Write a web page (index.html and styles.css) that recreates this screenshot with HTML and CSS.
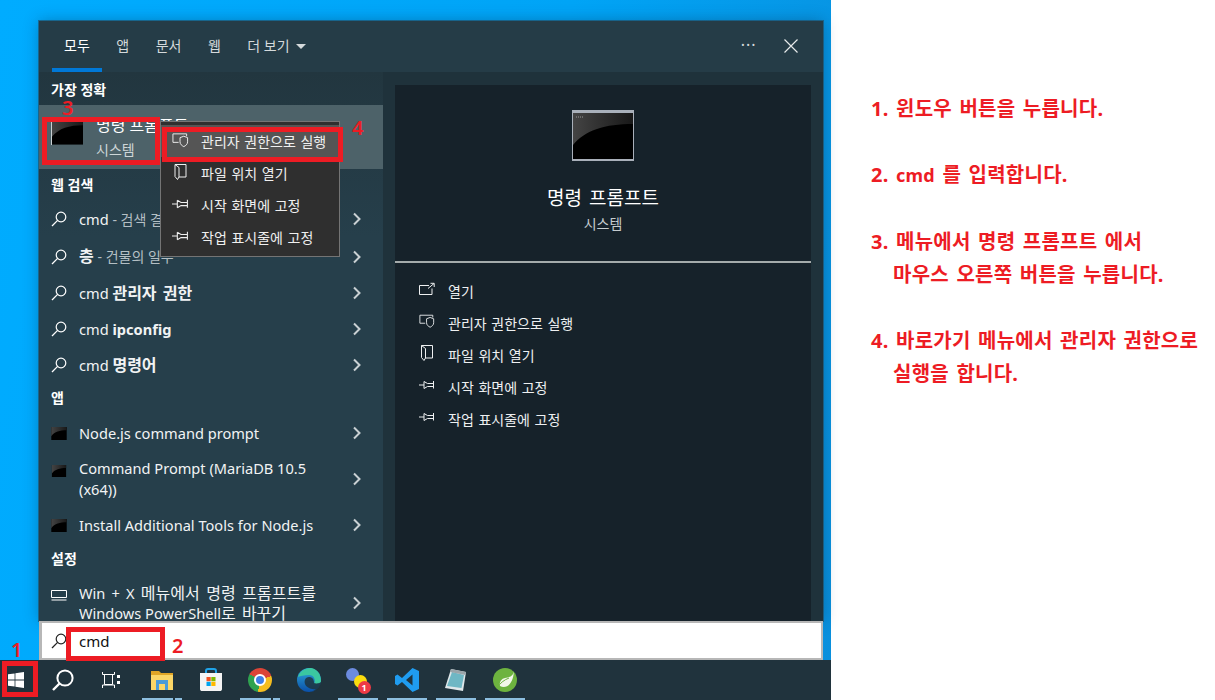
FILE: index.html
```html
<!DOCTYPE html>
<html lang="ko">
<head>
    <meta charset="UTF-8">
    <meta name="viewport" content="width=device-width, initial-scale=1.0">
    <title>명령 프롬프트 관리자 권한으로 실행</title>
    <link rel="stylesheet" href="styles.css">
</head>
<body>
    <svg class="defs" width="0" height="0">
        <defs>
            <linearGradient id="cmdGlow" x1="0" y1="0" x2="1" y2="0">
                <stop offset="0" stop-color="#444"/>
                <stop offset="1" stop-color="#181818"/>
            </linearGradient>
            <linearGradient id="edgeBlue" x1="0" y1="0" x2="0" y2="1">
                <stop offset="0" stop-color="#2fa8d8"/>
                <stop offset="1" stop-color="#0a4fa8"/>
            </linearGradient>
            <symbol id="i-search" viewBox="0 0 16 16">
                <circle cx="10" cy="6" r="4.8" fill="none" stroke="currentColor" stroke-width="1.2"/>
                <path d="M6.6 9.4 1 15" fill="none" stroke="currentColor" stroke-width="1.3"/>
            </symbol>
            <symbol id="i-chevron" viewBox="0 0 10 14">
                <path d="M2 1.5 7.5 7 2 12.5" fill="none" stroke="currentColor" stroke-width="2"/>
            </symbol>
            <symbol id="i-cmd" viewBox="0 0 32 27">
                <rect width="32" height="27" fill="#000"/>
                <path d="M0 0H32V7C18 7 7 10 0 19Z" fill="url(#cmdGlow)"/>
            </symbol>
            <symbol id="i-admin" viewBox="0 0 18 16">
                <path d="M7 10.5H1V1.5H15.5V4" fill="none" stroke="currentColor"/>
                <path d="M8.5 5.5 12.5 4 16.5 5.5V10C16.5 12.5 14.5 14 12.5 15 10.5 14 8.5 12.5 8.5 10Z" fill="none" stroke="currentColor"/>
            </symbol>
            <symbol id="i-file" viewBox="0 0 16 16">
                <path d="M2.5 .5H13.5V13H6.5M2.5 .5V12.5L5 15.5 6.5 13V3.5L2.5 .5" fill="none" stroke="currentColor"/>
            </symbol>
            <symbol id="i-pin" viewBox="0 0 16 10">
                <path d="M0 5H5M5 1.5 8.5 3.5H14.5M14.5 1V8.5M5 8.5 8.5 6.5H14.5M5 1.5V8.5" fill="none" stroke="currentColor"/>
            </symbol>
            <symbol id="i-open" viewBox="0 0 16 13">
                <path d="M10 3H.5V12H13V6M9 6 15 1M11.5 .8H15.2V4.5" fill="none" stroke="currentColor"/>
            </symbol>
        </defs>
    </svg>

    <div class="page">
        <div class="desktop">
            <div class="start-wrap">
                <div class="panel">
                    <div class="tabs">
                        <div class="tab active">모두</div>
                        <div class="tab">앱</div>
                        <div class="tab">문서</div>
                        <div class="tab">웹</div>
                        <div class="tab">더 보기 <span class="caret"></span></div>
                        <div class="tab-dots">···</div>
                        <svg class="tab-close" viewBox="0 0 14 14"><path d="M.5 .5 13.5 13.5M13.5 .5 .5 13.5" stroke="currentColor" stroke-width="1.2"/></svg>
                    </div>
                    <div class="panel-body">
                        <div class="results">
                            <div class="heading first">가장 정확</div>
                            <div class="best">
                                <svg class="best-icon"><use href="#i-cmd"/></svg>
                                <div>
                                    <div class="best-name">명령 프롬프트</div>
                                    <div class="best-sub">시스템</div>
                                </div>
                            </div>

                            <div class="heading">웹 검색</div>
                            <div class="row">
                                <svg class="row-icon"><use href="#i-search"/></svg>
                                <span class="row-text">cmd <span class="dim">- 검색 결과 보기</span></span>
                                <svg class="chevron"><use href="#i-chevron"/></svg>
                            </div>
                            <div class="row second">
                                <svg class="row-icon"><use href="#i-search"/></svg>
                                <span class="row-text"><b class="ko">층</b> <span class="dim">- 건물의 일부</span></span>
                                <svg class="chevron"><use href="#i-chevron"/></svg>
                            </div>
                            <div class="row">
                                <svg class="row-icon"><use href="#i-search"/></svg>
                                <span class="row-text">cmd <b class="ko">관리자 권한</b></span>
                                <svg class="chevron"><use href="#i-chevron"/></svg>
                            </div>
                            <div class="row">
                                <svg class="row-icon"><use href="#i-search"/></svg>
                                <span class="row-text">cmd <b>ipconfig</b></span>
                                <svg class="chevron"><use href="#i-chevron"/></svg>
                            </div>
                            <div class="row">
                                <svg class="row-icon"><use href="#i-search"/></svg>
                                <span class="row-text">cmd <b class="ko">명령어</b></span>
                                <svg class="chevron"><use href="#i-chevron"/></svg>
                            </div>

                            <div class="heading apps">앱</div>
                            <div class="row">
                                <svg class="row-icon app"><use href="#i-cmd"/></svg>
                                <span class="row-text">Node.js command prompt</span>
                                <svg class="chevron"><use href="#i-chevron"/></svg>
                            </div>
                            <div class="row tall">
                                <svg class="row-icon app top"><use href="#i-cmd"/></svg>
                                <span class="row-text">Command Prompt (MariaDB 10.5<br>(x64))</span>
                                <svg class="chevron"><use href="#i-chevron"/></svg>
                            </div>
                            <div class="row">
                                <svg class="row-icon app"><use href="#i-cmd"/></svg>
                                <span class="row-text">Install Additional Tools for Node.js</span>
                                <svg class="chevron"><use href="#i-chevron"/></svg>
                            </div>

                            <div class="heading">설정</div>
                            <div class="row tall settings">
                                <svg class="row-icon top" viewBox="0 0 16 12"><path d="M.5 1.5H15.5V8.5H.5ZM.5 11H15.5" fill="none" stroke="currentColor"/></svg>
                                <span class="row-text"><span class="spaced">Win + X <span class="ko">메뉴에서 명령 프롬프트를</span></span><br>Windows PowerShell<span class="ko">로 바꾸기</span></span>
                                <svg class="chevron"><use href="#i-chevron"/></svg>
                            </div>
                        </div>

                        <div class="preview">
                            <div class="preview-head">
                                <div class="preview-icon">
                                    <svg viewBox="0 0 60 46"><rect width="60" height="46" fill="#000"/><path d="M0 0H60V11C32 11 12 17 0 32Z" fill="url(#cmdGlow)"/><path d="M3 4H10" stroke="#999" stroke-dasharray="1 1"/></svg>
                                </div>
                                <div class="preview-name">명령 프롬프트</div>
                                <div class="preview-sub">시스템</div>
                            </div>
                            <div class="actions">
                                <div class="action"><svg class="action-icon"><use href="#i-open"/></svg>열기</div>
                                <div class="action"><svg class="action-icon"><use href="#i-admin"/></svg>관리자 권한으로 실행</div>
                                <div class="action"><svg class="action-icon"><use href="#i-file"/></svg>파일 위치 열기</div>
                                <div class="action"><svg class="action-icon"><use href="#i-pin"/></svg>시작 화면에 고정</div>
                                <div class="action"><svg class="action-icon"><use href="#i-pin"/></svg>작업 표시줄에 고정</div>
                            </div>
                        </div>
                    </div>
                </div>
            </div>

            <div class="searchbox">
                <svg class="search-icon"><use href="#i-search"/></svg>
                <span>cmd</span>
            </div>

            <div class="taskbar">
                <div class="task start">
                    <svg viewBox="0 0 16 16" width="16" height="16"><path d="M0 2.3 6.6 1.4V7.5H0ZM7.4 1.3 16 0V7.5H7.4ZM0 8.4H6.6V14.6L0 13.7ZM7.4 8.4H16V16L7.4 14.8Z" fill="#fff"/></svg>
                </div>
                <div class="task wide">
                    <svg viewBox="0 0 24 24" width="24" height="24"><circle cx="14" cy="10" r="7.6" fill="none" stroke="#fff" stroke-width="2"/><path d="M8.5 15.5 2 22" stroke="#fff" stroke-width="2.4"/></svg>
                </div>
                <div class="task wide view">
                    <svg viewBox="0 0 18 16" width="18" height="16"><path d="M.5 0V2.5H12.5V0M2.5 3V12.5H10.5V3M.5 16V13H12.5V16" fill="none" stroke="#fff"/><rect x="15" y="3" width="3" height="3" fill="#fff"/><rect x="15" y="9" width="3" height="3" fill="#fff"/></svg>
                </div>
                <div class="task app-task running split">
                    <svg viewBox="0 0 24 24" width="24" height="24">
                        <path d="M1 3H9L11 5H23V8H1Z" fill="#e0a526"/>
                        <path d="M1 7H23V22H1Z" fill="#fbd667"/>
                        <path d="M6 12H18V22H15V16H9V22H6Z" fill="#4a9bd9"/>
                    </svg>
                </div>
                <div class="task app-task">
                    <svg viewBox="0 0 24 24" width="24" height="24">
                        <path d="M7 6V3C7 1.5 8 1 9 1H15C16 1 17 1.5 17 3V6" fill="none" stroke="#1fa3e8" stroke-width="2"/>
                        <path d="M1 5H23V21C23 22.5 22 23 21 23H3C2 23 1 22.5 1 21Z" fill="#f4f4f4"/>
                        <rect x="7.5" y="9" width="4.2" height="4.2" fill="#f25022"/>
                        <rect x="12.3" y="9" width="4.2" height="4.2" fill="#7fba00"/>
                        <rect x="7.5" y="13.8" width="4.2" height="4.2" fill="#00a4ef"/>
                        <rect x="12.3" y="13.8" width="4.2" height="4.2" fill="#ffb900"/>
                    </svg>
                </div>
                <div class="task app-task running split">
                    <div class="chrome"></div>
                </div>
                <div class="task app-task">
                    <svg viewBox="0 0 24 24" width="24" height="24">
                        <circle cx="12" cy="12" r="12" fill="url(#edgeBlue)"/>
                        <path d="M1 9C3 2 10 0 14 0 20 1 24 6 24 13 24 16 20 16 17 16 19 12 17 7 12 7 7 7 3 8 1 9Z" fill="#3bc7a0"/>
                        <path d="M17 15C17 11 15 9 12 9 8 9 7 13 8 16 9 19 14 22 19 21 17 23 14 24 12 24 19 24 24 19 24 14 23 15 20 16 17 15Z" fill="#1e3440" opacity=".85"/>
                    </svg>
                </div>
                <div class="task app-task running">
                    <div class="chat">
                        <span class="chat-blue"></span>
                        <span class="chat-yellow"></span>
                        <span class="chat-badge">1</span>
                    </div>
                </div>
                <div class="task app-task running">
                    <svg viewBox="0 0 24 24" width="24" height="24">
                        <path d="M17.5 0 24 3V21L17.5 24 7 14 2.5 17.5 0 16V8L2.5 6.5 7 10ZM17.5 6.5 11 12 17.5 17.5Z" fill="#1f9cf0"/>
                    </svg>
                </div>
                <div class="task app-task running">
                    <svg viewBox="0 0 24 24" width="24" height="24">
                        <path d="M7 1 22 4 19 23 1 20Z" fill="#dfe7ea"/>
                        <path d="M8 4 20 7 17.5 20 3 18Z" fill="#6fb7c4"/>
                        <path d="M7 1 22 4 21.5 7 6 4Z" fill="#9aa5aa"/>
                    </svg>
                </div>
                <div class="task app-task running">
                    <svg viewBox="0 0 24 24" width="24" height="24">
                        <circle cx="12" cy="12" r="12" fill="#6db33f"/>
                        <path d="M21 3C20 9 16 9 12 10 8 11 6 14 7 18 13 21 20 17 21 3Z" fill="#f2f7ea"/>
                        <path d="M4 20C7 15 11 12 16 10" stroke="#6db33f" fill="none"/>
                    </svg>
                </div>
            </div>

            <div class="context-menu">
                <div class="menu-item hover"><svg class="menu-icon"><use href="#i-admin"/></svg>관리자 권한으로 실행</div>
                <div class="menu-item"><svg class="menu-icon"><use href="#i-file"/></svg>파일 위치 열기</div>
                <div class="menu-item"><svg class="menu-icon"><use href="#i-pin"/></svg>시작 화면에 고정</div>
                <div class="menu-item"><svg class="menu-icon"><use href="#i-pin"/></svg>작업 표시줄에 고정</div>
            </div>

            <div class="mark mark-start"></div>
            <div class="mark mark-search"></div>
            <div class="mark mark-best"></div>
            <div class="mark mark-menu"></div>
            <div class="mark-no no1">1</div>
            <div class="mark-no no2">2</div>
            <div class="mark-no no3">3</div>
            <div class="mark-no no4">4</div>
        </div>

        <div class="notes">
            <p>1. 윈도우 버튼을 누릅니다.</p>
            <p>2. <span class="latin">cmd</span> 를 입력합니다.</p>
            <p>3. 메뉴에서 명령 프롬프트 에서<br>마우스 오른쪽 버튼을 누릅니다.</p>
            <p>4. 바로가기 메뉴에서 관리자 권한으로<br>실행을 합니다.</p>
        </div>
    </div>
</body>
</html>
```

FILE: styles.css
```css
body {
    margin: 0;
    font-family: "Noto Sans", "Noto Sans CJK KR", sans-serif;
    background-color: #fff;
    overflow: hidden;
}

.defs {
    position: absolute;
}

.page {
    display: flex;
    height: 700px;
}

/* screenshot side */
.desktop {
    position: relative;
    width: 831px;
    flex-shrink: 0;
    display: flex;
    flex-direction: column;
    background: linear-gradient(100deg, #00acff 0%, #00a4f6 60%, #0a8fdc 100%);
}

.start-wrap {
    box-sizing: border-box;
    padding: 21px 8px 0 39px;
}

.panel {
    height: 600px;
    display: flex;
    flex-direction: column;
    background-color: #1f323b;
    color: #fff;
    overflow: hidden;
    box-shadow: 0 0 0 1px rgba(40, 70, 85, 0.6), 0 0 14px rgba(0, 40, 70, 0.35);
}

.tabs {
    height: 51px;
    flex-shrink: 0;
    display: flex;
    align-items: stretch;
    gap: 2.5px;
    box-sizing: border-box;
    padding-left: 13px;
    background-color: #253c47;
    font-size: 14px;
    color: #d5dadc;
}

.tab {
    position: relative;
    padding: 0 12px;
    line-height: 50px;
    white-space: nowrap;
}

.tab.active {
    color: #fff;
}

.tab.active::after {
    content: "";
    position: absolute;
    left: 0;
    right: 0;
    bottom: 0;
    height: 4px;
    background-color: #0078d7;
}

.caret {
    display: inline-block;
    margin-left: 3px;
    vertical-align: 2px;
    border-left: 5px solid transparent;
    border-right: 5px solid transparent;
    border-top: 5px solid #d5dadc;
}

.tab-dots {
    margin-left: auto;
    line-height: 49px;
    font-size: 16px;
    letter-spacing: 1px;
}

.tab-close {
    width: 14px;
    height: 14px;
    margin: 18px 25px 0 25px;
    color: #e6e9ea;
}

.panel-body {
    flex: 1;
    display: flex;
    min-height: 0;
}

.results {
    width: 344px;
    flex-shrink: 0;
    background: linear-gradient(180deg, #22363f 0%, #263f4b 30%, #263f4b 100%);
    font-size: 14.6px;
}

.heading {
    height: 32px;
    box-sizing: border-box;
    padding-left: 12px;
    line-height: 32px;
    font-size: 14px;
    font-weight: 700;
}

.heading.first {
    height: 33px;
    padding-top: 9px;
    line-height: 18px;
}

.heading.apps {
    line-height: 30px;
}

.best {
    height: 64px;
    box-sizing: border-box;
    padding-left: 12px;
    display: flex;
    align-items: center;
    gap: 13px;
    background-color: #4d6269;
}

.best-icon {
    width: 32px;
    height: 27px;
    margin-bottom: 11px;
    border-left: 1px solid #c8cfd2;
    box-sizing: border-box;
}

.best-name {
    font-size: 16px;
    line-height: 24px;
    white-space: nowrap;
}

.best-sub {
    margin-top: 1px;
    font-size: 14px;
    line-height: 24px;
    color: #ced6d8;
}

.row {
    height: 36px;
    box-sizing: border-box;
    padding: 0 21px 0 12px;
    display: flex;
    align-items: center;
    line-height: 21px;
    color: #f1f3f4;
}

.row.second {
    height: 37px;
    margin-top: 1px;
}

.row.tall {
    height: 56px;
}

.row.settings {
    line-height: 20px;
}

.row-text {
    flex: 1;
    margin-left: 12px;
    white-space: nowrap;
    overflow: hidden;
}

.row-icon {
    width: 16px;
    height: 16px;
    flex-shrink: 0;
    color: #fff;
}

.row-icon.app {
    height: 13px;
}

.row-icon.top {
    align-self: flex-start;
    margin-top: 14px;
    height: 12px;
}

.row-text b {
    font-weight: 700;
}

.ko {
    font-size: 16px;
    word-spacing: 2px;
}

.spaced {
    word-spacing: 2.4px;
}

.spaced .ko {
    word-spacing: 2.4px;
}

.dim {
    font-size: 14px;
    color: #b4bfc4;
}

.chevron {
    width: 10px;
    height: 14px;
    color: #c9d0d3;
}

.preview {
    flex: 1;
    margin: 13px 12px 0 12px;
    background-color: #16222a;
}

.preview-head {
    height: 178px;
    box-sizing: border-box;
    padding-top: 25px;
    border-bottom: 2px solid #a4abab;
    text-align: center;
}

.preview-icon {
    width: 60px;
    height: 46px;
    margin: 0 auto;
    border: 1px solid #a9b0ba;
    border-top-width: 3px;
    border-bottom-width: 2px;
    background-color: #000;
}

.preview-icon svg {
    display: block;
    width: 60px;
    height: 46px;
}

.preview-name {
    margin-top: 23px;
    font-size: 19px;
    line-height: 28px;
    word-spacing: 2px;
}

.preview-sub {
    font-size: 14px;
    line-height: 24px;
    color: #c5cccf;
}

.actions {
    padding: 12px 0 0 24px;
}

.action {
    height: 32px;
    display: flex;
    align-items: center;
    font-size: 14px;
    word-spacing: 1px;
    color: #eef0f1;
}

.action-icon {
    width: 16px;
    height: 16px;
    margin-right: 13px;
    margin-top: -4px;
    flex-shrink: 0;
}

/* search input */
.searchbox {
    height: 39px;
    margin: 0 8px 0 39px;
    box-sizing: border-box;
    display: flex;
    align-items: center;
    border: 2px solid #b7b7b7;
    border-left-width: 3px;
    background-color: #fff;
    font-size: 15px;
    color: #111;
}

.search-icon {
    width: 16px;
    height: 16px;
    margin: 0 12px 0 9px;
    color: #222;
}

/* taskbar */
.taskbar {
    height: 40px;
    display: flex;
    background-color: #20333d;
}

.task {
    height: 40px;
    display: flex;
    align-items: center;
    justify-content: center;
    box-sizing: border-box;
    position: relative;
}

.task.start {
    width: 31px;
    margin-right: 8px;
}

.task.wide {
    width: 48px;
}

.task.view {
    margin-right: 2px;
}

.task.app-task {
    width: 49px;
}

.task.running::after {
    content: "";
    position: absolute;
    left: 5px;
    right: 4px;
    bottom: 0;
    height: 2px;
    background-color: #8dbfe0;
}

.task.split::before {
    content: "";
    position: absolute;
    right: 11px;
    bottom: 0;
    width: 2px;
    height: 2px;
    background-color: #20333d;
    z-index: 1;
}

.chrome {
    width: 24px;
    height: 24px;
    border-radius: 50%;
    display: flex;
    align-items: center;
    justify-content: center;
    background: conic-gradient(#db4437 0deg 70deg, #f5bd1f 70deg 190deg, #2fa24f 190deg 300deg, #db4437 300deg 360deg);
}

.chrome::after {
    content: "";
    width: 8px;
    height: 8px;
    border: 2px solid #fff;
    border-radius: 50%;
    background-color: #3f7fe8;
}

.chat {
    position: relative;
    width: 26px;
    height: 26px;
}

.chat-blue {
    position: absolute;
    left: 1px;
    top: 1px;
    width: 13px;
    height: 13px;
    border-radius: 50%;
    background-color: #6c8bdf;
}

.chat-yellow {
    position: absolute;
    left: 9px;
    top: 8px;
    width: 13px;
    height: 13px;
    border-radius: 50%;
    background-color: #fbdc0e;
}

.chat-badge {
    position: absolute;
    left: 13px;
    top: 14px;
    width: 13px;
    height: 13px;
    border-radius: 50%;
    background-color: #ee3a45;
    color: #fff;
    font-size: 9px;
    font-weight: 700;
    line-height: 13px;
    text-align: center;
}

/* right click menu */
.context-menu {
    position: absolute;
    left: 160px;
    top: 121px;
    width: 180px;
    height: 136px;
    box-sizing: border-box;
    padding: 3px 0;
    background-color: #2f2f2f;
    border: 1px solid #747474;
    color: #f0f0f0;
    font-size: 14px;
    word-spacing: 1px;
}

.menu-item {
    height: 32px;
    display: flex;
    align-items: center;
    padding-left: 11px;
}

.menu-item.hover {
    background-color: #555;
}

.menu-icon {
    width: 17px;
    height: 16px;
    margin-right: 12px;
    margin-top: -3px;
    flex-shrink: 0;
}

/* red annotations */
.mark {
    position: absolute;
    box-sizing: border-box;
    border: 5px solid #ed1c24;
}

.mark-start {
    left: 2px;
    top: 661px;
    width: 36px;
    height: 36px;
}

.mark-search {
    left: 66px;
    top: 627px;
    width: 99px;
    height: 34px;
}

.mark-best {
    left: 42px;
    top: 117px;
    width: 118px;
    height: 48px;
}

.mark-menu {
    left: 162px;
    top: 127px;
    width: 181px;
    height: 35px;
}

.mark-no {
    position: absolute;
    font-size: 20px;
    line-height: 18px;
    font-weight: 600;
    color: #ed1c24;
}

.no1 { left: 11px; top: 641px; }
.no2 { left: 172px; top: 637px; }
.no3 { left: 62px; top: 99px; }
.no4 { left: 352px; top: 119px; }

/* instructions */
.notes {
    flex: 1;
    padding: 92px 0 0 40px;
    font-size: 20px;
    font-weight: 700;
    line-height: 33px;
    letter-spacing: 0.25px;
    word-spacing: 2px;
    color: #ed1c24;
    white-space: nowrap;
}

.notes p {
    margin: 0 0 33px 0;
    padding-left: 22px;
    text-indent: -22px;
}

.latin {
    font-size: 18px;
}
```
